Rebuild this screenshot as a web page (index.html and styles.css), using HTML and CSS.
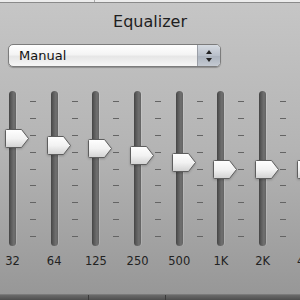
FILE: index.html
```html
<!DOCTYPE html>
<html lang="en">
<head>
    <meta charset="UTF-8">
    <title>Equalizer</title>
    <link rel="stylesheet" href="styles.css">
</head>
<body>

<div class="window">
    <div class="list-strip">
        <span class="col col-a">Name Artist</span>
        <span class="col col-b">1:52 More Than One</span>
    </div>

    <h2 class="title">Equalizer</h2>

    <div class="preset">
        <span class="preset-value">Manual</span>
        <span class="preset-arrows">
            <svg width="8" height="14" viewBox="0 0 8 14">
                <path d="M4 1 L7 5 H1 Z" fill="#222"/>
                <path d="M4 13 L7 9 H1 Z" fill="#222"/>
            </svg>
        </span>
    </div>

    <div class="bands">
        <div class="band">
            <div class="rail">
                <div class="track"></div>
                <div class="ticks"><i></i><i></i><i></i><i></i><i></i><i></i><i></i><i></i><i></i></div>
                <svg class="knob" style="top: 37px" width="26" height="21" viewBox="0 0 26 21"><use href="#knob"/></svg>
            </div>
            <div class="freq">32</div>
        </div>
        <div class="band">
            <div class="rail">
                <div class="track"></div>
                <div class="ticks"><i></i><i></i><i></i><i></i><i></i><i></i><i></i><i></i><i></i></div>
                <svg class="knob" style="top: 44px" width="26" height="21" viewBox="0 0 26 21"><use href="#knob"/></svg>
            </div>
            <div class="freq">64</div>
        </div>
        <div class="band">
            <div class="rail">
                <div class="track"></div>
                <div class="ticks"><i></i><i></i><i></i><i></i><i></i><i></i><i></i><i></i><i></i></div>
                <svg class="knob" style="top: 47px" width="26" height="21" viewBox="0 0 26 21"><use href="#knob"/></svg>
            </div>
            <div class="freq">125</div>
        </div>
        <div class="band">
            <div class="rail">
                <div class="track"></div>
                <div class="ticks"><i></i><i></i><i></i><i></i><i></i><i></i><i></i><i></i><i></i></div>
                <svg class="knob" style="top: 54px" width="26" height="21" viewBox="0 0 26 21"><use href="#knob"/></svg>
            </div>
            <div class="freq">250</div>
        </div>
        <div class="band">
            <div class="rail">
                <div class="track"></div>
                <div class="ticks"><i></i><i></i><i></i><i></i><i></i><i></i><i></i><i></i><i></i></div>
                <svg class="knob" style="top: 61px" width="26" height="21" viewBox="0 0 26 21"><use href="#knob"/></svg>
            </div>
            <div class="freq">500</div>
        </div>
        <div class="band">
            <div class="rail">
                <div class="track"></div>
                <div class="ticks"><i></i><i></i><i></i><i></i><i></i><i></i><i></i><i></i><i></i></div>
                <svg class="knob" style="top: 68px" width="26" height="21" viewBox="0 0 26 21"><use href="#knob"/></svg>
            </div>
            <div class="freq">1K</div>
        </div>
        <div class="band">
            <div class="rail">
                <div class="track"></div>
                <div class="ticks"><i></i><i></i><i></i><i></i><i></i><i></i><i></i><i></i><i></i></div>
                <svg class="knob" style="top: 68px" width="26" height="21" viewBox="0 0 26 21"><use href="#knob"/></svg>
            </div>
            <div class="freq">2K</div>
        </div>
        <div class="band">
            <div class="rail">
                <div class="track"></div>
                <div class="ticks"><i></i><i></i><i></i><i></i><i></i><i></i><i></i><i></i><i></i></div>
                <svg class="knob" style="top: 68px" width="26" height="21" viewBox="0 0 26 21"><use href="#knob"/></svg>
            </div>
            <div class="freq">4K</div>
        </div>
    </div>

    <div class="status-bar">
        <span class="seg seg-a"></span>
        <span class="seg seg-b"></span>
        <span class="seg"></span>
    </div>
</div>

<!-- shared knob shape -->
<svg width="0" height="0" class="defs">
    <defs>
        <linearGradient id="knobFill" x1="0" y1="0" x2="0" y2="1">
            <stop offset="0" stop-color="#ffffff"/>
            <stop offset="0.5" stop-color="#f2f2f2"/>
            <stop offset="1" stop-color="#d2d2d2"/>
        </linearGradient>
        <path id="knob" d="M2.5 1.5 H17.5 L24.5 10.5 L17.5 19.5 H2.5 Q1.5 19.5 1.5 18.5 V2.5 Q1.5 1.5 2.5 1.5 Z"
              fill="url(#knobFill)" stroke="#5e5e5e" stroke-width="1" stroke-linejoin="round"/>
    </defs>
</svg>

</body>
</html>
```

FILE: styles.css
```css
body {
    margin: 0;
    font-family: "DejaVu Sans", Verdana, sans-serif;
}
.window {
    width: 300px;
    height: 300px;
    overflow: hidden;
    display: flex;
    flex-direction: column;
    background: linear-gradient(#c6c6c6, #b4b4b4 50%, #969696);
}
.list-strip {
    height: 2px;
    overflow: hidden;
    background-color: #ececec;
    border-bottom: 1px solid #8a8a8a;
    display: flex;
    font-size: 11px;
    line-height: 2px;
    color: #222;
}
.list-strip .col {
    display: block;
    margin-top: -4px;
    white-space: nowrap;
}
.col-a {
    width: 88px;
    padding-left: 6px;
    border-right: 1px solid #aaa;
}
.col-b {
    padding-left: 38px;
}
.title {
    margin: 9px 0 0;
    height: 20px;
    font-size: 16px;
    font-weight: normal;
    line-height: 20px;
    text-align: center;
    color: #1e1e1e;
}
.preset {
    margin: 12px 0 0 8px;
    width: 211px;
    height: 21px;
    display: flex;
    border: 1px solid #7c7c7c;
    border-radius: 5px;
    background: linear-gradient(#ffffff, #f4f4f4 45%, #e6e6e6 55%, #f6f6f6);
    box-shadow: 0 1px 1px rgba(0, 0, 0, 0.25);
    overflow: hidden;
}
.preset-value {
    flex: 1;
    padding-left: 10px;
    font-size: 13px;
    line-height: 21px;
    color: #111;
}
.preset-arrows {
    width: 22px;
    display: flex;
    align-items: center;
    justify-content: center;
    border-left: 1px solid #9a9ea6;
    background: linear-gradient(#d6dbe2, #b9c0ca 50%, #aab2bd 51%, #c4cad2);
}
.bands {
    margin-top: 24px;
    display: flex;
}
.band {
    flex: 0 0 41.7px;
    display: flex;
    flex-direction: column;
}
.rail {
    position: relative;
    height: 155px;
    display: flex;
}
.track {
    width: 7px;
    margin-left: 9px;
    border-radius: 4px;
    background: linear-gradient(to right, #444, #5a5a5a 30%, #707070 70%, #626262);
    box-shadow: 1px 0 0 rgba(255, 255, 255, 0.15);
}
.ticks {
    margin-left: 14px;
    width: 6px;
    padding: 10px 0 9px;
    display: flex;
    flex-direction: column;
    justify-content: space-between;
}
.ticks i {
    display: block;
    height: 1px;
    background-color: #646464;
}
.knob {
    position: absolute;
    left: 4px;
    filter: drop-shadow(0 1px 1px rgba(0, 0, 0, 0.2));
}
.freq {
    width: 25px;
    margin-top: 8px;
    font-size: 11.5px;
    text-align: center;
    color: #222;
    white-space: nowrap;
}
.status-bar {
    margin-top: auto;
    height: 5px;
    display: flex;
    background: linear-gradient(#6a6a6a, #4e4e4e);
    border-top: 1px solid #7a7a7a;
}
.seg {
    display: block;
    flex: 1;
}
.seg-a {
    flex: 0 0 88px;
    border-right: 1px solid #3a3a3a;
}
.seg-b {
    flex: 0 0 76px;
    border-right: 1px solid #3a3a3a;
}
.defs {
    position: absolute;
}
```
